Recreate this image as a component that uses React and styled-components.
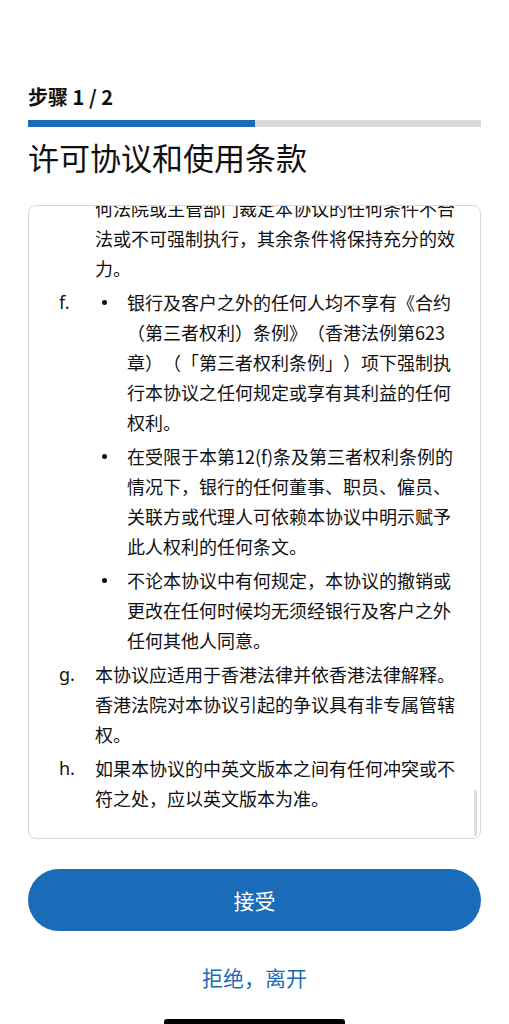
import React from "react";
import styled, { createGlobalStyle } from "styled-components";

const GlobalStyle = createGlobalStyle`
  html, body { margin: 0; padding: 0; background: #ffffff; }
  body {
    font-family: "Noto Sans CJK SC", "Noto Sans", "Liberation Sans", sans-serif;
    color: #111111;
    -webkit-font-smoothing: antialiased;
    text-spacing-trim: space-all;
  }
  * { box-sizing: border-box; }
`;

const Screen = styled.div`
  width: 509px;
  height: 1024px;
  display: flex;
  flex-direction: column;
  padding: 84px 28px 0 28px;
  overflow: hidden;
`;

const StepLabel = styled.div`
  font-family: "Noto Sans CJK SC", sans-serif;
  font-size: 20px;
  line-height: 26px;
  font-weight: 700;
  color: #111111;
`;

const Progress = styled.div`
  margin-top: 10px;
  height: 7px;
  background: #d9d9d9;
  display: flex;
`;

const ProgressFill = styled.div`
  height: 100%;
  background: #1a6bb8;
`;

const Title = styled.h1`
  margin: 9px 0 0 0;
  font-family: "Noto Sans CJK SC", sans-serif;
  font-size: 31px;
  line-height: 42px;
  font-weight: 400;
  color: #111111;
`;

const TermsBox = styled.div`
  position: relative;
  margin-top: 27px;
  height: 634px;
  border: 1px solid #d8d8d8;
  border-radius: 8px;
  overflow: hidden;
`;

const TermsScroll = styled.div`
  height: 100%;
  overflow: hidden;
  padding: 0 20px 0 30px;
  font-size: 18px;
  line-height: 30px;
  color: #111111;
  text-spacing-trim: space-all;
`;

const ClauseList = styled.div`
  margin-top: -13px;
  display: flex;
  flex-direction: column;
  gap: 4px;
`;

const Clause = styled.div`
  display: grid;
  grid-template-columns: 36px 1fr;
`;

const Marker = styled.span`
  font-family: "Noto Sans", "Noto Sans CJK SC", sans-serif;
  font-size: 18px;
`;

const ClauseText = styled.div`
  min-width: 0;
`;

const BulletList = styled.ul`
  list-style: none;
  margin: 0;
  padding: 0;
  display: flex;
  flex-direction: column;
  gap: 4px;
`;

const Bullet = styled.li`
  position: relative;
  padding-left: 32px;
  &::before {
    content: "";
    position: absolute;
    left: 7px;
    top: 13px;
    width: 5px;
    height: 5px;
    border-radius: 50%;
    background: #111111;
  }
`;

const ScrollThumb = styled.div`
  position: absolute;
  right: 3px;
  bottom: 2px;
  width: 3px;
  height: 46px;
  border-radius: 2px;
  background: #dcdcdc;
`;

const PrimaryButton = styled.button`
  margin-top: 30px;
  height: 62px;
  width: 100%;
  border: none;
  border-radius: 31px;
  background: #1a6bb8;
  color: #ffffff;
  font-family: "Noto Sans CJK SC", sans-serif;
  font-size: 21px;
  font-weight: 400;
  cursor: pointer;
`;

const LinkButton = styled.button`
  margin-top: 31px;
  align-self: center;
  height: 30px;
  padding: 0;
  border: none;
  background: transparent;
  color: #1a6bb8;
  font-family: "Noto Sans CJK SC", sans-serif;
  font-size: 21px;
  line-height: 30px;
  text-spacing-trim: space-all;
  cursor: pointer;
`;

const HomeIndicator = styled.div`
  margin-top: auto;
  align-self: center;
  width: 181px;
  height: 5px;
  border-radius: 3px 3px 0 0;
  background: #000000;
`;

const clauses = [
  {
    marker: "",
    text: "何法院或主管部门裁定本协议的任何条件不合法或不可强制执行，其余条件将保持充分的效力。",
  },
  {
    marker: "f.",
    bullets: [
      "银行及客户之外的任何人均不享有《合约（第三者权利）条例》（香港法例第623章）（「第三者权利条例」）项下强制执行本协议之任何规定或享有其利益的任何权利。",
      "在受限于本第12(f)条及第三者权利条例的情况下，银行的任何董事、职员、僱员、关联方或代理人可依赖本协议中明示赋予此人权利的任何条文。",
      "不论本协议中有何规定，本协议的撤销或更改在任何时候均无须经银行及客户之外任何其他人同意。",
    ],
  },
  {
    marker: "g.",
    text: "本协议应适用于香港法律并依香港法律解释。香港法院对本协议引起的争议具有非专属管辖权。",
  },
  {
    marker: "h.",
    text: "如果本协议的中英文版本之间有任何冲突或不符之处，应以英文版本为准。",
  },
];

export default function App() {
  const step = 1;
  const total = 2;
  return (
    <>
      <GlobalStyle />
      <Screen>
        <StepLabel>步骤 {step} / {total}</StepLabel>
        <Progress>
          <ProgressFill style={{ width: `${(step / total) * 100}%` }} />
        </Progress>
        <Title>许可协议和使用条款</Title>
        <TermsBox>
          <TermsScroll>
            <ClauseList>
              {clauses.map((c, i) => (
                <Clause key={i}>
                  <Marker>{c.marker}</Marker>
                  <ClauseText>
                    {c.bullets ? (
                      <BulletList>
                        {c.bullets.map((b, j) => (
                          <Bullet key={j}>{b}</Bullet>
                        ))}
                      </BulletList>
                    ) : (
                      c.text
                    )}
                  </ClauseText>
                </Clause>
              ))}
            </ClauseList>
          </TermsScroll>
          <ScrollThumb />
        </TermsBox>
        <PrimaryButton>接受</PrimaryButton>
        <LinkButton>拒绝，离开</LinkButton>
        <HomeIndicator />
      </Screen>
    </>
  );
}
